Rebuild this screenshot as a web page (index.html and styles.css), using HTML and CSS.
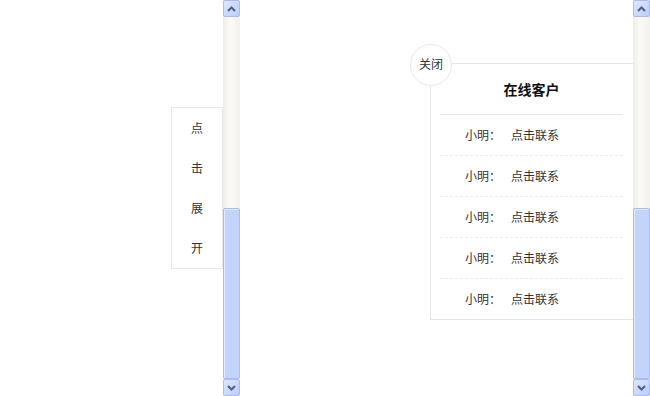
FILE: index.html
```html
<!DOCTYPE html>
<html lang="zh-CN">
<head>
    <meta charset="UTF-8">
    <title>在线客户</title>
    <link rel="stylesheet" href="styles.css">
</head>
<body>
    <!-- Left frame: collapsed tab -->
    <div class="frame frame-left">
        <div class="frame-body">
            <div class="open-tab">
                <span>点</span>
                <span>击</span>
                <span>展</span>
                <span>开</span>
            </div>
        </div>
        <div class="scrollbar">
            <div class="sb-btn">
                <svg width="9" height="6" viewBox="0 0 9 6"><polyline points="1,5 4.5,1.5 8,5" fill="none" stroke="#4d6185" stroke-width="2"/></svg>
            </div>
            <div class="sb-track"></div>
            <div class="sb-thumb"></div>
            <div class="sb-btn">
                <svg width="9" height="6" viewBox="0 0 9 6"><polyline points="1,1 4.5,4.5 8,1" fill="none" stroke="#4d6185" stroke-width="2"/></svg>
            </div>
        </div>
    </div>

    <!-- Right frame: opened panel -->
    <div class="frame frame-right">
        <div class="frame-body">
            <div class="service-panel">
                <div class="close-btn">关闭</div>
                <div class="panel-title">在线客户</div>
                <ul class="service-list">
                    <li><span class="name">小明：</span>点击联系</li>
                    <li><span class="name">小明：</span>点击联系</li>
                    <li><span class="name">小明：</span>点击联系</li>
                    <li><span class="name">小明：</span>点击联系</li>
                    <li><span class="name">小明：</span>点击联系</li>
                </ul>
            </div>
        </div>
        <div class="scrollbar">
            <div class="sb-btn">
                <svg width="9" height="6" viewBox="0 0 9 6"><polyline points="1,5 4.5,1.5 8,5" fill="none" stroke="#4d6185" stroke-width="2"/></svg>
            </div>
            <div class="sb-track"></div>
            <div class="sb-thumb"></div>
            <div class="sb-btn">
                <svg width="9" height="6" viewBox="0 0 9 6"><polyline points="1,1 4.5,4.5 8,1" fill="none" stroke="#4d6185" stroke-width="2"/></svg>
            </div>
        </div>
    </div>
</body>
</html>
```

FILE: styles.css
```css
body {
    margin: 0;
    display: flex;
    height: 396px;
    overflow: hidden;
    font-family: "Liberation Sans", "Noto Sans CJK SC", sans-serif;
    font-size: 12px;
    color: #333;
    background: #fff;
}

.frame {
    display: flex;
    height: 396px;
}

.frame-left {
    width: 240px;
}

.frame-right {
    width: 410px;
}

.frame-body {
    flex: 1;
    display: flex;
    align-items: flex-start;
}

/* Collapsed tab */
.frame-left .frame-body {
    justify-content: flex-end;
    padding-top: 107px;
}

.open-tab {
    width: 50px;
    border: 1px solid #e6e6e6;
    display: flex;
    flex-direction: column;
}

.open-tab span {
    height: 39px;
    padding-top: 1px;
    line-height: 40px;
    text-align: center;
}

/* Opened panel */
.frame-right .frame-body {
    padding-top: 63px;
    padding-left: 190px;
}

.service-panel {
    position: relative;
    flex: 1;
    border: 1px solid #e6e6e6;
    border-right: none;
    background: #fff;
}

.close-btn {
    position: absolute;
    left: -21px;
    top: -20px;
    width: 40px;
    height: 40px;
    border: 1px solid #e8e8e8;
    border-radius: 50%;
    background: #fff;
    line-height: 41px;
    text-align: center;
    color: #333;
}

.panel-title {
    height: 49px;
    padding-top: 1px;
    line-height: 50px;
    text-align: center;
    font-size: 14px;
    font-weight: bold;
    color: #111;
    border-bottom: 1px solid #e6e6e6;
    margin: 0 10px 0 9px;
}

.service-list {
    list-style: none;
    margin: 0 10px 0 9px;
    padding: 0;
}

.service-list li {
    height: 39px;
    padding-top: 1px;
    line-height: 40px;
    padding-left: 25px;
    border-bottom: 1px dashed #ebebeb;
}

.service-list li:last-child {
    border-bottom: none;
}

.service-list .name {
    margin-right: 10px;
}

/* XP style scrollbar */
.scrollbar {
    width: 17px;
    height: 396px;
    display: flex;
    flex-direction: column;
    background: linear-gradient(to right, #eeede5, #fbfaf7 40%, #f3f1ec);
}

.sb-btn {
    box-sizing: border-box;
    width: 17px;
    height: 17px;
    border: 1px solid #a9bdec;
    border-radius: 2px;
    background: linear-gradient(to bottom right, #dce6fd, #bccdf9);
    display: flex;
    align-items: center;
    justify-content: center;
}

.sb-track {
    height: 191px;
}

.sb-thumb {
    height: 171px;
    box-sizing: border-box;
    border: 1px solid #a9bdec;
    border-radius: 2px;
    background: #c2d3fc;
    box-shadow: inset 1px 1px 0 #e3ebfe;
}
```
